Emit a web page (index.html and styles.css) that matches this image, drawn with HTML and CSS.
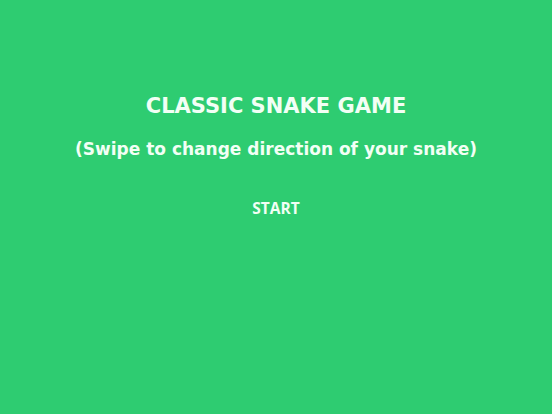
FILE: index.html
```html
<!DOCTYPE html>
<html>
<head>
<meta charset="utf-8">
<link rel="stylesheet" href="styles.css">
<title>Classic Snake Game</title>
</head>
<body>
<main class="menu">
  <h1 class="menu-title">CLASSIC SNAKE GAME</h1>
  <p class="menu-hint">(Swipe to change direction of your snake)</p>
  <button class="menu-start" type="button">START</button>
</main>
</body>
</html>
```

FILE: styles.css
```css
html, body {
  margin: 0;
  height: 100%;
}

body {
  background: #2ecc71;
  color: #f2fff5;
}

.menu {
  display: flex;
  flex-direction: column;
  align-items: center;
  padding-top: 93px;
}

.menu-title {
  margin: 0;
  font-family: "DejaVu Sans", sans-serif;
  font-weight: 700;
  font-size: 21px;
  line-height: 26px;
}

.menu-hint {
  margin: 18px 0 0;
  font-family: "DejaVu Sans", sans-serif;
  font-weight: 700;
  font-size: 17px;
  line-height: 24px;
}

.menu-start {
  margin-top: 37px;
  padding: 0;
  border: 0;
  background: none;
  color: inherit;
  font-family: "Open Sans", sans-serif;
  font-weight: 700;
  font-size: 15.5px;
  line-height: 20px;
  cursor: pointer;
}
```
